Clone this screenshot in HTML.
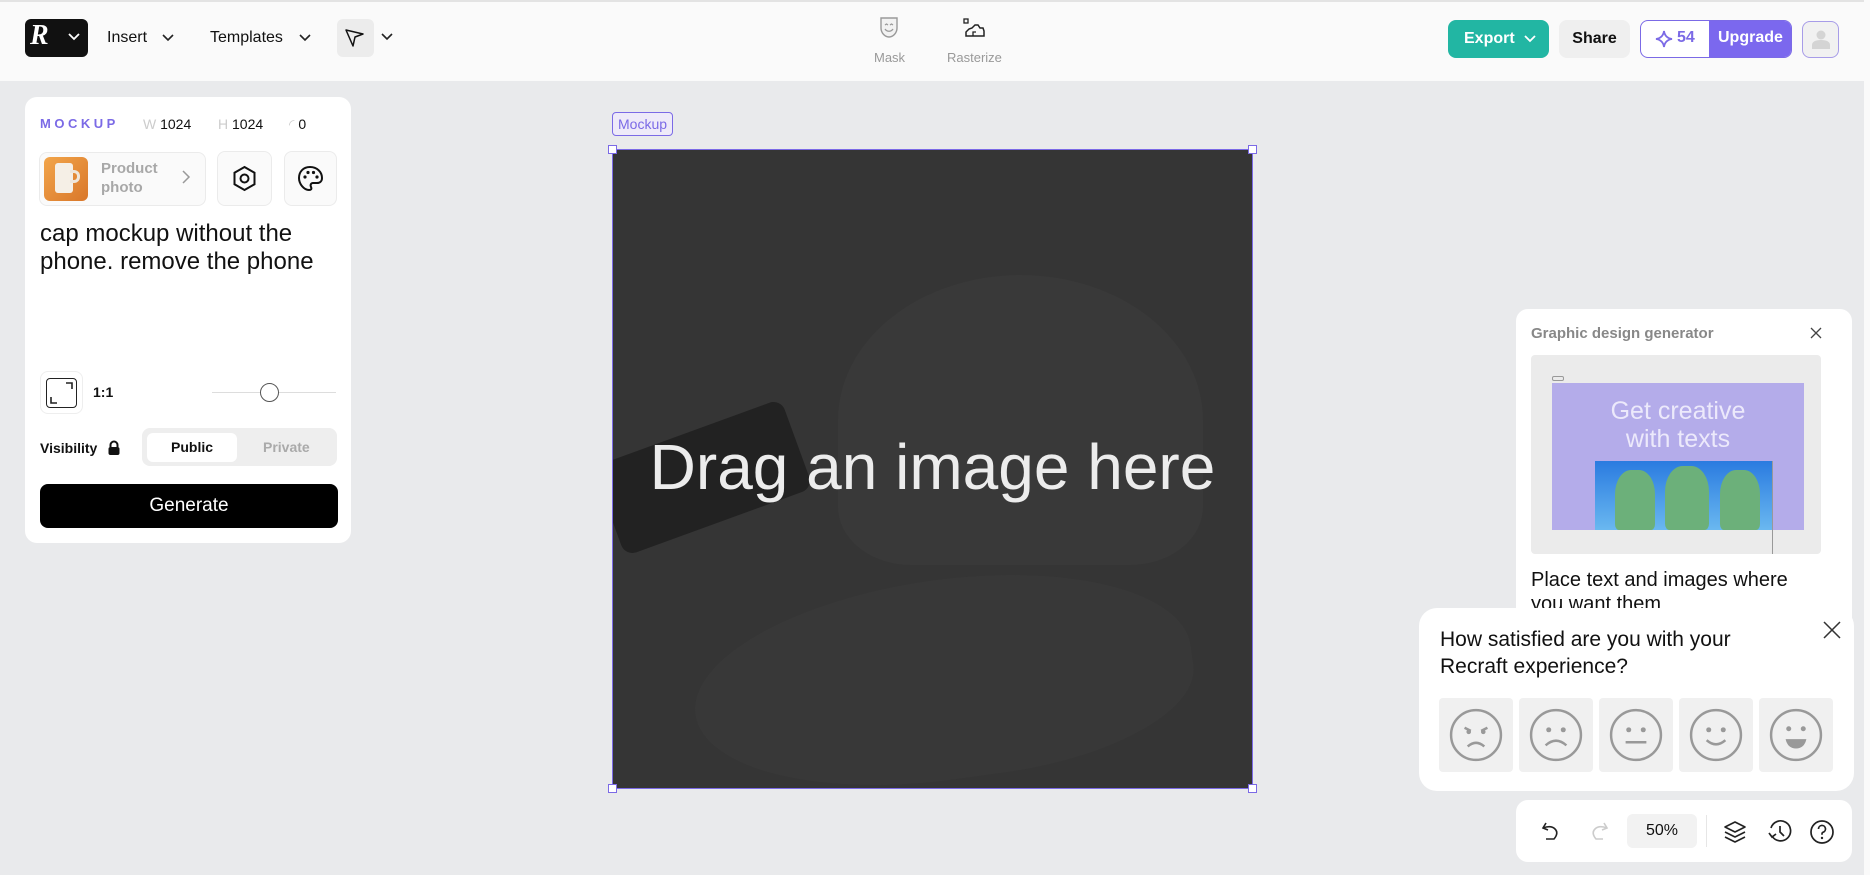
<!DOCTYPE html>
<html><head><meta charset="utf-8"><style>
*{box-sizing:border-box;margin:0;padding:0}
body{width:1870px;height:875px;overflow:hidden;background:#e9eaec;font-family:"Liberation Sans",Arial,sans-serif;position:relative;color:#111}
.abs{position:absolute}
.hdr{left:0;top:0;width:1864px;height:81px;background:#fafafa;border-top:2px solid #e3e3e3}
.sb{left:1864px;top:0;width:6px;height:875px;background:#fafafa}
.t{position:absolute;white-space:nowrap}
.card{background:#fff;border-radius:12px;position:absolute}
.btn{position:absolute;border-radius:8px;display:flex;align-items:center;justify-content:center;font-weight:bold;font-size:16px}
.emo{position:absolute;top:698px;width:74px;height:74px;background:#f0f0f0;border-radius:4px;display:flex;align-items:center;justify-content:center}
</style></head><body>
<div class="abs hdr"></div>
<div class="abs sb"></div>
<!-- logo -->
<div class="abs" style="left:25px;top:19px;width:63px;height:38px;background:#111;border-radius:6px"></div>
<div class="t" style="left:30px;top:20px;color:#fff;font:bold italic 28px 'Liberation Serif',serif">R</div>
<svg class="abs" style="left:68px;top:33px" width="12" height="8"><path d="M1 1l5 5 5-5" stroke="#fff" stroke-width="1.8" fill="none"/></svg>
<div class="t" style="left:107px;top:29px;font-size:16px">Insert</div>
<svg class="abs" style="left:162px;top:34px" width="12" height="8"><path d="M1 1l5 5 5-5" stroke="#222" stroke-width="1.6" fill="none"/></svg>
<div class="t" style="left:210px;top:29px;font-size:16px">Templates</div>
<svg class="abs" style="left:299px;top:34px" width="12" height="8"><path d="M1 1l5 5 5-5" stroke="#222" stroke-width="1.6" fill="none"/></svg>
<div class="abs" style="left:337px;top:19px;width:37px;height:38px;background:#ececec;border-radius:6px"></div>
<svg class="abs" style="left:344px;top:27px" width="22" height="22"><path d="M2 3L19 7 11 10 9 19Z" stroke="#111" stroke-width="1.5" fill="none" stroke-linejoin="round"/></svg>
<svg class="abs" style="left:381px;top:33px" width="12" height="8"><path d="M1 1l5 5 5-5" stroke="#222" stroke-width="1.6" fill="none"/></svg>
<!-- mask / rasterize -->
<svg class="abs" style="left:878px;top:16px" width="22" height="24"><path d="M3 2h16v10c0 5-4 9-8 9s-8-4-8-9z" fill="#f2f2f2" stroke="#999" stroke-width="1.4"/><path d="M7 9l1.5-1 1.5 1M12 9l1.5-1 1.5 1M7 13c2 3 6 3 8 0" stroke="#999" stroke-width="1.3" fill="none"/></svg>
<div class="t" style="left:874px;top:50px;font-size:13px;color:#999">Mask</div>
<svg class="abs" style="left:962px;top:18px" width="24" height="22"><rect x="2" y="1" width="4" height="4" fill="none" stroke="#222" stroke-width="1.3"/><path d="M4 18v-4l3-3 3-1 3-3h3l2 3h3l1 3v5z" fill="none" stroke="#222" stroke-width="1.5"/><path d="M11 18v-4h3" stroke="#222" stroke-width="1.3" fill="none"/></svg>
<div class="t" style="left:947px;top:50px;font-size:13px;color:#999">Rasterize</div>
<!-- right header -->
<div class="btn" style="left:1448px;top:20px;width:101px;height:38px;background:#22b6a3;color:#fff;justify-content:flex-start;padding-left:16px">Export</div>
<svg class="abs" style="left:1524px;top:35px" width="12" height="8"><path d="M1 1l5 5 5-5" stroke="#fff" stroke-width="1.8" fill="none"/></svg>
<div class="btn" style="left:1559px;top:20px;width:71px;height:38px;background:#efefef;color:#111">Share</div>
<div class="abs" style="left:1640px;top:20px;width:152px;height:38px;border:1.5px solid #7b6ae6;border-radius:8px;overflow:hidden;background:#fff">
 <div class="abs" style="left:68px;top:0;width:84px;height:38px;background:#7b68ee"></div>
</div>
<svg class="abs" style="left:1655px;top:30px" width="18" height="18"><path d="M9 1Q10 8 17 9Q10 10 9 17Q8 10 1 9Q8 8 9 1Z" fill="none" stroke="#7b6ae6" stroke-width="1.8"/></svg>
<div class="t" style="left:1677px;top:29px;font-size:16px;font-weight:bold;color:#7b6ae6">54</div>
<div class="t" style="left:1718px;top:29px;font-size:16px;font-weight:bold;color:#fff">Upgrade</div>
<div class="abs" style="left:1802px;top:21px;width:37px;height:37px;border:1.5px solid #a79ce8;border-radius:8px;background:#f1f1f1"></div>
<svg class="abs" style="left:1810px;top:28px" width="22" height="22"><circle cx="11" cy="7" r="4.5" fill="#d4d4d4"/><path d="M2 21v-4c0-3 3-5 9-5s9 2 9 5v4z" fill="#d4d4d4"/></svg>

<!-- left panel -->
<div class="card" style="left:25px;top:97px;width:326px;height:446px"></div>
<div class="t" style="left:40px;top:116px;font-size:13px;font-weight:bold;letter-spacing:3.5px;color:#7b6ae6">MOCKUP</div>
<div class="t" style="left:143px;top:116px;font-size:14px;color:#ccc">W <span style="color:#111">1024</span></div>
<div class="t" style="left:218px;top:116px;font-size:14px;color:#ccc">H <span style="color:#111">1024</span></div>
<div class="t" style="left:289px;top:116px;font-size:14px;color:#ccc">◜ <span style="color:#111">0</span></div>
<div class="abs" style="left:39px;top:152px;width:167px;height:54px;border:1px solid #ebebeb;border-radius:8px;background:#fafafa"></div>
<div class="abs" style="left:44px;top:157px;width:44px;height:44px;border-radius:6px;background:linear-gradient(135deg,#f2a54a,#d9772a)"></div>
<div class="abs" style="left:55px;top:163px;width:18px;height:30px;background:#f5efe6;border-radius:3px"></div>
<div class="abs" style="left:70px;top:170px;width:10px;height:13px;border:3px solid #efe6da;border-left:none;border-radius:0 6px 6px 0"></div>
<div class="t" style="left:101px;top:159px;font-size:15px;font-weight:bold;color:#a8a8a8;line-height:19px">Product<br>photo</div>
<svg class="abs" style="left:181px;top:170px" width="10" height="14"><path d="M2 1l6 6-6 6" stroke="#999" stroke-width="1.5" fill="none"/></svg>
<div class="abs" style="left:217px;top:151px;width:55px;height:55px;border:1px solid #ebebeb;border-radius:8px;background:#fafafa"></div>
<svg class="abs" style="left:231px;top:165px" width="27" height="27"><path d="M13.5 2l10 5.7v11.6l-10 5.7-10-5.7V7.7z" fill="none" stroke="#111" stroke-width="2"/><circle cx="13.5" cy="13.5" r="4" fill="none" stroke="#111" stroke-width="2"/></svg>
<div class="abs" style="left:284px;top:151px;width:53px;height:55px;border:1px solid #ebebeb;border-radius:8px;background:#fafafa"></div>
<svg class="abs" style="left:297px;top:165px" width="27" height="27"><path d="M13 2C6 2 2 7 2 13s5 12 10 12c2 0 3-1 2-3s0-4 2-4h4c3 0 5-2 5-5C25 7 20 2 13 2z" fill="none" stroke="#111" stroke-width="2"/><circle cx="8" cy="12" r="1.6" fill="#111"/><circle cx="11" cy="7.5" r="1.6" fill="#111"/><circle cx="16.5" cy="7.5" r="1.6" fill="#111"/><circle cx="20" cy="12" r="1.6" fill="#111"/></svg>
<div class="t" style="left:40px;top:220px;font-size:24px;line-height:28px;color:#111">cap mockup without the<br>phone. remove the phone</div>
<div class="abs" style="left:40px;top:371px;width:43px;height:43px;border:1px solid #eee;border-radius:8px"></div>
<div class="abs" style="left:46px;top:378px;width:31px;height:30px;border:1.8px solid #222;border-radius:4px"></div>
<svg class="abs" style="left:46px;top:378px" width="31" height="30"><path d="M20 5h6v6M5 19v6h6" stroke="#222" stroke-width="1.6" fill="none"/></svg>
<div class="t" style="left:93px;top:384px;font-size:14px;font-weight:bold">1:1</div>
<div class="abs" style="left:212px;top:392px;width:124px;height:1px;background:#ddd"></div>
<div class="abs" style="left:260px;top:383px;width:19px;height:19px;border:1.5px solid #555;border-radius:50%;background:#fff"></div>
<div class="t" style="left:40px;top:440px;font-size:14px;font-weight:bold">Visibility</div>
<svg class="abs" style="left:107px;top:440px" width="14" height="16"><path d="M3.5 7V5a3.5 3.5 0 0 1 7 0v2" stroke="#111" stroke-width="2" fill="none"/><rect x="1.5" y="7" width="11" height="8" rx="2" fill="#111"/></svg>
<div class="abs" style="left:142px;top:428px;width:195px;height:38px;background:#eee;border-radius:8px"></div>
<div class="abs" style="left:147px;top:433px;width:90px;height:29px;background:#fff;border-radius:6px"></div>
<div class="t" style="left:171px;top:439px;font-size:14px;font-weight:bold">Public</div>
<div class="t" style="left:263px;top:439px;font-size:14px;font-weight:bold;color:#aaa">Private</div>
<div class="btn" style="left:40px;top:484px;width:298px;height:44px;background:#000;color:#fff;font-size:19px;font-weight:normal">Generate</div>

<!-- canvas -->
<div class="t" style="left:612px;top:112px;height:24px;padding:0 5px;border:1px solid #7b6ae6;border-radius:4px;font-size:14px;line-height:22px;color:#7b6ae6;background:#eeeaf9">Mockup</div>
<div class="abs" style="left:612px;top:149px;width:641px;height:640px;background:#353535;border:1px solid #7b6ae6;overflow:hidden">
 <div class="abs" style="left:80px;top:430px;width:500px;height:200px;border-radius:50% 50% 40% 50%;background:#383838;transform:rotate(-8deg)"></div>
 <div class="abs" style="left:225px;top:125px;width:365px;height:290px;border-radius:50% 50% 20% 20%;background:#393939"></div>
 <div class="abs" style="left:-10px;top:280px;width:200px;height:95px;background:#222;border-radius:12px;transform:rotate(-20deg)"></div>
</div>
<div class="t" style="left:612px;top:430px;width:641px;text-align:center;font-size:64px;color:#ececec">Drag an image here</div>
<div class="abs" style="left:608px;top:145px;width:9px;height:9px;background:#fff;border:1px solid #7b6ae6"></div>
<div class="abs" style="left:1248px;top:145px;width:9px;height:9px;background:#fff;border:1px solid #7b6ae6"></div>
<div class="abs" style="left:608px;top:784px;width:9px;height:9px;background:#fff;border:1px solid #7b6ae6"></div>
<div class="abs" style="left:1248px;top:784px;width:9px;height:9px;background:#fff;border:1px solid #7b6ae6"></div>

<!-- graphic design card -->
<div class="card" style="left:1516px;top:309px;width:336px;height:320px"></div>
<div class="t" style="left:1531px;top:325px;font-size:15px;font-weight:bold;color:#888">Graphic design generator</div>
<svg class="abs" style="left:1810px;top:327px" width="12" height="12"><path d="M1 1l10 10M11 1L1 11" stroke="#444" stroke-width="1.3"/></svg>
<div class="abs" style="left:1531px;top:355px;width:290px;height:199px;background:#ebebeb;border-radius:4px"></div>
<div class="abs" style="left:1552px;top:376px;width:12px;height:5px;border:1px solid #999;border-radius:2px"></div>
<div class="abs" style="left:1552px;top:383px;width:252px;height:147px;background:#b4acea"></div>
<div class="t" style="left:1552px;top:397px;width:252px;text-align:center;font-size:25px;line-height:28px;color:#ece9fb">Get creative<br>with texts</div>
<div class="abs" style="left:1595px;top:461px;width:178px;height:69px;background:linear-gradient(180deg,#2a7be0,#6ab8f0)"></div>
<div class="abs" style="left:1615px;top:470px;width:40px;height:60px;border-radius:40% 40% 10% 10%;background:#6cb07a"></div>
<div class="abs" style="left:1665px;top:466px;width:44px;height:64px;border-radius:40% 40% 10% 10%;background:#6cb07a"></div>
<div class="abs" style="left:1720px;top:470px;width:40px;height:60px;border-radius:40% 40% 10% 10%;background:#6cb07a"></div>
<div class="abs" style="left:1772px;top:461px;width:1px;height:93px;background:#999"></div>
<div class="t" style="left:1531px;top:568px;font-size:20px;line-height:24px;color:#111">Place text and images where<br>you want them</div>

<!-- survey -->
<div class="card" style="left:1419px;top:608px;width:435px;height:183px;border-radius:18px"></div>
<div class="t" style="left:1440px;top:626px;font-size:21px;line-height:27px;color:#111">How satisfied are you with your<br>Recraft experience?</div>
<svg class="abs" style="left:1823px;top:621px" width="18" height="18"><path d="M1 1l16 16M17 1L1 17" stroke="#333" stroke-width="1.5"/></svg>
<div class="emo" style="left:1439px"><svg width="54" height="54" viewBox="0 0 52 52"><circle cx="26" cy="26" r="24" fill="none" stroke="#999" stroke-width="2.4"/><path d="M15 19l6 3M37 19l-6 3" stroke="#999" stroke-width="2.4"/><circle cx="19" cy="23" r="2.2" fill="#999"/><circle cx="33" cy="23" r="2.2" fill="#999"/><path d="M18 37q8-7 16 0" stroke="#999" stroke-width="2.4" fill="none"/></svg></div>
<div class="emo" style="left:1519px"><svg width="54" height="54" viewBox="0 0 52 52"><circle cx="26" cy="26" r="24" fill="none" stroke="#999" stroke-width="2.4"/><circle cx="19" cy="21" r="2.4" fill="#999"/><circle cx="33" cy="21" r="2.4" fill="#999"/><path d="M16 36q10-9 20 0" stroke="#999" stroke-width="2.4" fill="none"/></svg></div>
<div class="emo" style="left:1599px"><svg width="54" height="54" viewBox="0 0 52 52"><circle cx="26" cy="26" r="24" fill="none" stroke="#999" stroke-width="2.4"/><circle cx="19" cy="21" r="2.4" fill="#999"/><circle cx="33" cy="21" r="2.4" fill="#999"/><path d="M16 33h20" stroke="#999" stroke-width="2.4"/></svg></div>
<div class="emo" style="left:1679px"><svg width="54" height="54" viewBox="0 0 52 52"><circle cx="26" cy="26" r="24" fill="none" stroke="#999" stroke-width="2.4"/><circle cx="19" cy="21" r="2.4" fill="#999"/><circle cx="33" cy="21" r="2.4" fill="#999"/><path d="M17 31q9 8 18 0" stroke="#999" stroke-width="2.4" fill="none"/></svg></div>
<div class="emo" style="left:1759px"><svg width="54" height="54" viewBox="0 0 52 52"><circle cx="26" cy="26" r="24" fill="none" stroke="#999" stroke-width="2.4"/><circle cx="19" cy="20" r="2.4" fill="#999"/><circle cx="33" cy="20" r="2.4" fill="#999"/><path d="M16 30h20q-2 9-10 9t-10-9z" fill="#999"/></svg></div>

<!-- bottom toolbar -->
<div class="card" style="left:1516px;top:800px;width:336px;height:62px"></div>
<svg class="abs" style="left:1540px;top:820px" width="22" height="24"><path d="M6 3L3 8l5 2" stroke="#222" stroke-width="1.6" fill="none"/><path d="M3 8q8-3 12 1t-1 10H6" stroke="#222" stroke-width="1.6" fill="none"/></svg>
<svg class="abs" style="left:1588px;top:820px" width="22" height="24"><path d="M16 3l3 5-5 2" stroke="#ccc" stroke-width="1.6" fill="none"/><path d="M19 8q-8-3-12 1t1 10h7" stroke="#ccc" stroke-width="1.6" fill="none"/></svg>
<div class="abs" style="left:1627px;top:814px;width:70px;height:34px;background:#f2f2f2;border-radius:6px;font-size:16px;text-align:center;line-height:34px">50%</div>
<div class="abs" style="left:1706px;top:815px;width:1px;height:32px;background:#e6e6e6"></div>
<svg class="abs" style="left:1723px;top:820px" width="24" height="24"><path d="M12 2l10 5-10 5-10-5z M2 12l10 5 10-5 M2 17l10 5 10-5" stroke="#222" stroke-width="1.6" fill="none" stroke-linejoin="round"/></svg>
<svg class="abs" style="left:1767px;top:819px" width="26" height="26"><path d="M5 17A10 10 0 1 0 4 9" stroke="#222" stroke-width="1.7" fill="none"/><path d="M13 7v6l4 4M2 14l3 4 4-3" stroke="#222" stroke-width="1.7" fill="none"/></svg>
<svg class="abs" style="left:1809px;top:819px" width="26" height="26"><circle cx="13" cy="13" r="11" fill="none" stroke="#222" stroke-width="1.7"/><path d="M9.5 10a3.5 3.5 0 1 1 4.5 3.3c-1 .4-1 1-1 2.5" stroke="#222" stroke-width="1.7" fill="none"/><circle cx="13" cy="19" r="1.2" fill="#222"/></svg>
</body></html>
